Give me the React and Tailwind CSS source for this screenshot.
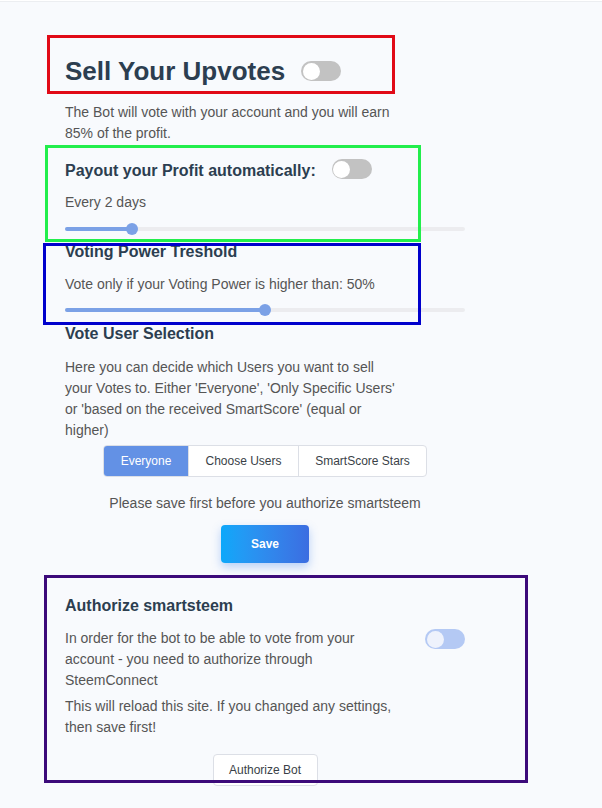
import { useState } from 'react';

const Toggle = ({ on = false, soft = false, className = '' }) => (
  <div
    className={`relative w-10 h-5 rounded-full shrink-0 ${soft ? 'bg-[#b4c9f4]' : 'bg-[#c2c2c2]'} ${className}`}
  >
    <div
      className={`absolute top-[1.5px] w-[17px] h-[17px] rounded-full ${soft ? 'bg-[#eef2fc]' : 'bg-white'} ${on ? 'right-[1.5px]' : 'left-[1.5px]'}`}
    />
  </div>
);

const Slider = ({ percent, className = '' }) => (
  <div className={`relative h-3 w-[400px] ${className}`}>
    <div className="absolute left-0 right-0 top-1 h-1 rounded-full bg-[#ececef]" />
    <div className="absolute left-0 top-1 h-1 rounded-full bg-[#7ba1e6]" style={{ width: `${percent}%` }} />
    <div
      className="absolute top-0 w-3 h-3 -ml-1.5 rounded-full bg-[#7ba1e6]"
      style={{ left: `${percent}%` }}
    />
  </div>
);

const App = () => {
  const [mode, setMode] = useState('everyone');
  const modes = [
    { id: 'everyone', label: 'Everyone', w: 'w-[84px]' },
    { id: 'users', label: 'Choose Users', w: 'w-[110px]' },
    { id: 'stars', label: 'SmartScore Stars', w: 'w-[128px]' },
  ];

  return (
    <div className="relative min-h-[808px] bg-[#f8fafd] font-['Liberation_Sans',Arial,sans-serif] text-[#555]">
      <div className="h-[2px] bg-white border-b border-[#eceef1]" />

      <div className="pl-[65px] w-[465px] flex flex-col">
        {/* Sell your upvotes */}
        <div className="flex items-center mt-[53px]">
          <h2 className="text-[26px] leading-8 font-bold text-[#2c3e50]">Sell Your Upvotes</h2>
          <Toggle className="ml-4" />
        </div>
        <p className="w-[336px] text-sm leading-[21px] mt-[15px]">
          The Bot will vote with your account and you will earn 85% of the profit.
        </p>

        {/* Payout */}
        <div className="flex items-start mt-[15px]">
          <h3 className="text-base leading-5 font-bold text-[#2c3e50] mt-[2px]">Payout your Profit automatically:</h3>
          <Toggle className="ml-4" />
        </div>
        <p className="text-sm leading-[21px] mt-[11px]">Every 2 days</p>
        <Slider percent={16.7} className="mt-[10px]" />

        {/* Voting power */}
        <h3 className="text-base leading-5 font-bold text-[#2c3e50] mt-[7px]">Voting Power Treshold</h3>
        <p className="text-sm leading-[21px] mt-3">Vote only if your Voting Power is higher than: 50%</p>
        <Slider percent={50} className="mt-[9px]" />

        {/* Vote user selection */}
        <h3 className="text-base leading-5 font-bold text-[#2c3e50] mt-2">Vote User Selection</h3>
        <p className="w-[336px] text-sm leading-[21px] mt-[13px]">
          Here you can decide which Users you want to sell your Votes to. Either 'Everyone', 'Only Specific Users' or 'based on the received SmartScore' (equal or higher)
        </p>
        <div className="flex justify-center mt-1">
          <div className="flex h-8 rounded border border-[#dcdfe6] overflow-hidden bg-white">
            {modes.map((m, i) => (
              <button
                key={m.id}
                onClick={() => setMode(m.id)}
                className={`${m.w} text-xs ${i > 0 ? 'border-l border-[#dcdfe6]' : ''} ${mode === m.id ? 'bg-[#6391e5] text-white font-medium' : 'text-[#3a3f47]'}`}
              >
                {m.label}
              </button>
            ))}
          </div>
        </div>
        <p className="text-sm leading-[21px] text-center mt-4">Please save first before you authorize smartsteem</p>
        <div className="flex justify-center mt-[11px]">
          <button className="w-[88px] h-[38px] rounded text-xs font-bold text-white bg-gradient-to-r from-[#0aa8fa] to-[#3b6de1] shadow-[0_4px_10px_rgba(64,128,235,0.35)]">
            Save
          </button>
        </div>

        {/* Authorize */}
        <h3 className="text-base leading-5 font-bold text-[#2c3e50] mt-[33px]">Authorize smartsteem</h3>
        <div className="flex items-start mt-3">
          <div className="w-[336px] text-sm leading-[21px]">
            <p>In order for the bot to be able to vote from your account - you need to authorize through SteemConnect</p>
            <p className="mt-[5px]">This will reload this site. If you changed any settings, then save first!</p>
          </div>
          <Toggle soft className="ml-6 mt-[1px]" />
        </div>
        <div className="flex justify-center mt-4">
          <button className="w-[105px] h-8 rounded border border-[#dcdfe6] bg-white text-xs text-[#3a3f47]">
            Authorize Bot
          </button>
        </div>
      </div>

      {/* annotation frames */}
      <div className="absolute left-[47px] top-[35px] w-[348px] h-[59px] border-[3px] border-[#e10a17] pointer-events-none" />
      <div className="absolute left-[45px] top-[145px] w-[376px] h-[97px] border-[3px] border-[#22ee4c] pointer-events-none" />
      <div className="absolute left-[43px] top-[243px] w-[378px] h-[82px] border-[3px] border-[#0000cc] pointer-events-none" />
      <div className="absolute left-[44px] top-[575px] w-[484px] h-[208px] border-[3px] border-[#3c0a7a] pointer-events-none" />
    </div>
  );
};

export default App;
